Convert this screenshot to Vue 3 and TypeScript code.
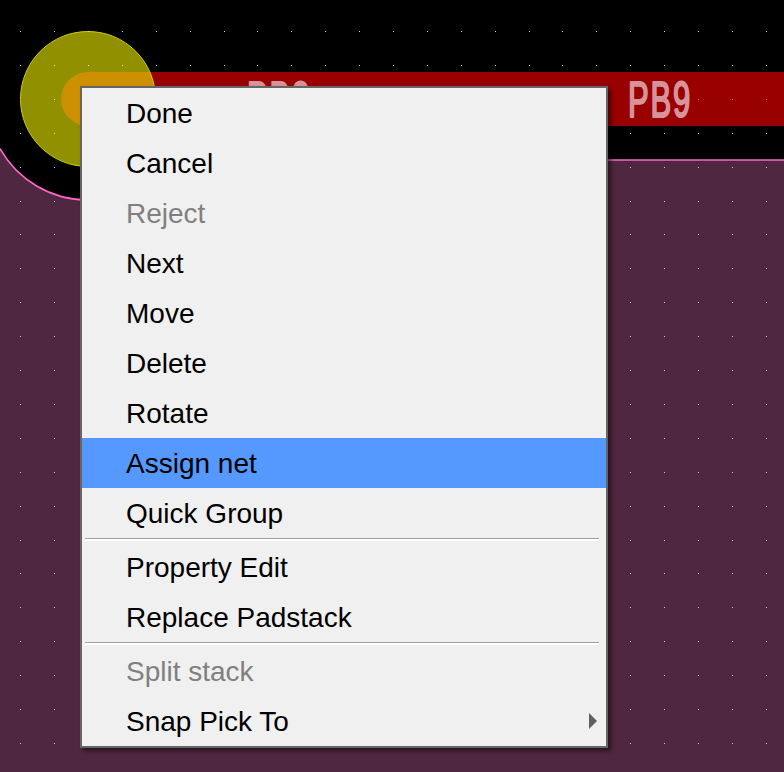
<template>
  <div class="board">
    <svg class="canvas" width="784" height="772" viewBox="0 0 784 772">
      <path class="copper" d="M0 148.6 A101 101 0 0 0 88 200 L160 200 L160 160 L784 160 L784 772 L0 772 Z" />
      <path class="outline" d="M0 148.6 A101 101 0 0 0 88 200 L160 200 L160 160 L784 160" />
      <rect x="88" y="72" width="696" height="54" fill="#990000" />
      <circle cx="88" cy="99" r="67.5" fill="#909000" />
      <path d="M149.9 72 L88 72 A27 27 0 0 0 88 126 L149.9 126 A67.5 67.5 0 0 0 149.9 72 Z" fill="#cc9000" />
      <circle cx="88" cy="99" r="67.5" fill="none" stroke="#cfcf00" stroke-width="1" />
      <text class="pin" transform="translate(247 117) scale(0.62 1)">PB8</text>
      <text class="pin" transform="translate(628 117) scale(0.62 1)">PB9</text>
      <rect v-for="d in dots" :key="d.id" :x="d.x" :y="d.y" width="1" height="1" :fill="d.color" />
    </svg>

    <div class="menu">
      <template v-for="entry in entries" :key="entry.label">
        <div
          class="item"
          :class="{ disabled: entry.disabled, active: entry.active }"
        >
          <span class="label">{{ entry.label }}</span>
          <svg v-if="entry.submenu" class="arrow" width="8" height="16" viewBox="0 0 8 16">
            <polygon points="0,0 8,8 0,16" />
          </svg>
        </div>
        <div v-if="entry.separator" class="separator"></div>
      </template>
    </div>
  </div>
</template>

<script setup lang="ts">
interface Entry {
  label: string
  disabled?: boolean
  active?: boolean
  separator?: boolean
  submenu?: boolean
}

const entries: Entry[] = [
  { label: 'Done' },
  { label: 'Cancel' },
  { label: 'Reject', disabled: true },
  { label: 'Next' },
  { label: 'Move' },
  { label: 'Delete' },
  { label: 'Rotate' },
  { label: 'Assign net', active: true },
  { label: 'Quick Group', separator: true },
  { label: 'Property Edit' },
  { label: 'Replace Padstack', separator: true },
  { label: 'Split stack', disabled: true },
  { label: 'Snap Pick To', submenu: true }
]

// grid dots are about 33.9px apart, snapped down to whole pixels
const dotColor = (x: number, y: number): string => {
  const inPad = (x - 88) ** 2 + (y - 99) ** 2 < 67 ** 2
  if (inPad) return '#e0e0b0'
  if (y > 72 && y < 126) return '#d86a6a'
  const onBoard = y > 160 && (x > 160 || (x - 88) ** 2 + (y - 99) ** 2 > 101 ** 2)
  return onBoard ? '#dcc0d4' : '#dcdcdc'
}

const dots: { id: string; x: number; y: number; color: string }[] = []
for (let i = 0; i < 23; i++) {
  for (let j = 0; j < 22; j++) {
    const x = Math.floor(20.8 + 33.88 * i)
    const y = Math.floor(31.5 + 33.9 * j)
    dots.push({ id: `${i}-${j}`, x, y, color: dotColor(x, y) })
  }
}
</script>

<style>
html,
body {
  background: #000;
}
</style>

<style scoped>
.board {
  position: relative;
  width: 784px;
  height: 772px;
  overflow: hidden;
  background: #000;
}

.canvas {
  position: absolute;
  top: 0;
  left: 0;
  display: block;
}

.copper {
  fill: #4f2740;
}

.outline {
  fill: none;
  stroke: #ff66cc;
  stroke-width: 1.6;
}

.pin {
  font-family: "Liberation Sans", Arial, sans-serif;
  font-size: 50px;
  letter-spacing: 3px;
  fill: #d8929a;
  stroke: #d8929a;
  stroke-width: 2.2;
  stroke-linejoin: round;
}

.menu {
  position: absolute;
  top: 86px;
  left: 80px;
  width: 524px;
  border: 2px solid #666;
  background: #f0f0f0;
  box-shadow: 3px 3px 4px rgba(0, 0, 0, 0.5);
  font-family: "Liberation Sans", Arial, sans-serif;
  font-size: 28px;
  color: #000;
}

.item {
  display: flex;
  align-items: center;
  justify-content: space-between;
  height: 50px;
  padding: 0 9px 0 44px;
  line-height: 48px;
}

.label {
  margin-top: 2px;
}

.item.disabled {
  color: #808080;
}

.item.active {
  background: #5599ff;
}

.arrow {
  display: block;
  fill: #5f5f5f;
}

.separator {
  height: 1px;
  margin: 0 7px 1px 3px;
  background: #a0a0a0;
  border-bottom: 2px solid #fff;
}
</style>
